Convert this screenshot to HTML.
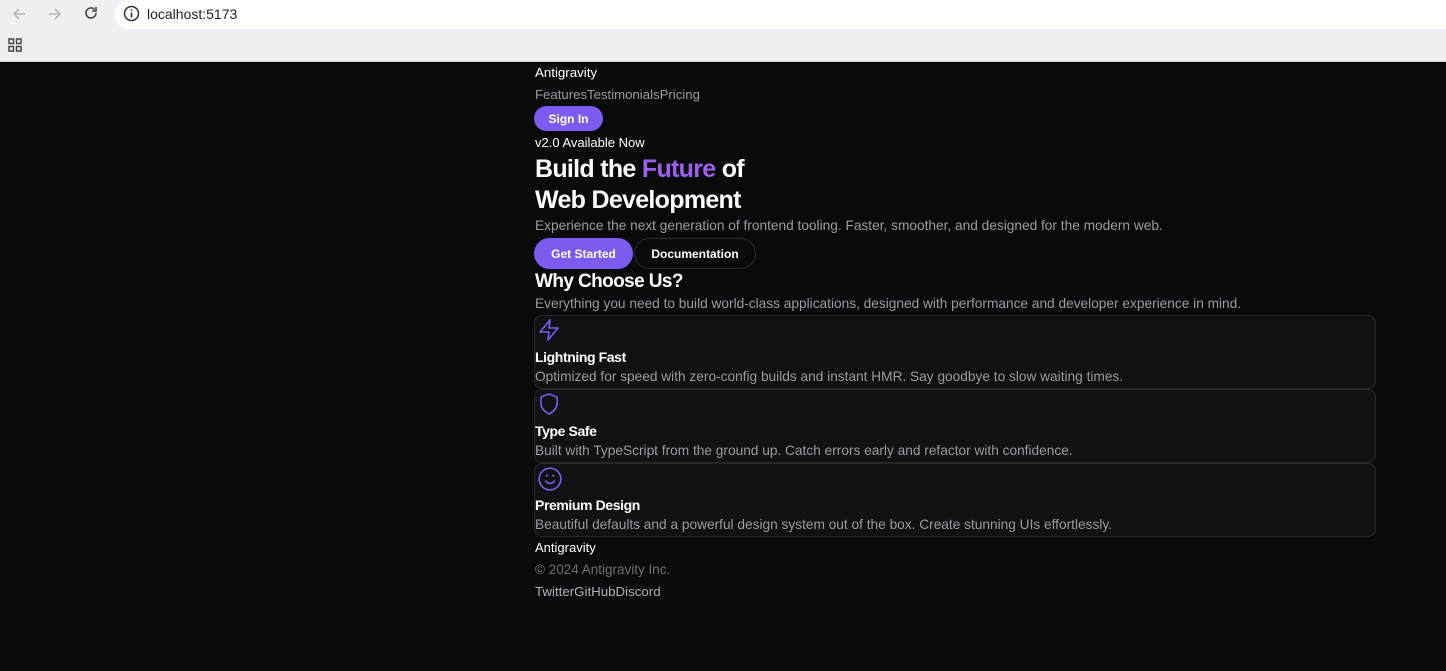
<!DOCTYPE html>
<html><head><style>
*{margin:0;padding:0;box-sizing:border-box}
body{width:1446px;height:671px;overflow:hidden;background:#0a0a0b;font-family:"Liberation Sans",sans-serif;position:relative}
.chrome{position:absolute;left:0;top:0;width:1446px;height:62px;background:#f0eff4;border-bottom:1px solid #d8d8dc}
.url{position:absolute;left:115px;top:0;width:1331px;height:29px;background:#fff;border-radius:14px 0 0 14px}
.a{position:absolute;left:535px;white-space:nowrap}
.w{color:#fff}.g{color:#9a9aa3}
.btn{position:absolute;border-radius:16px;color:#fff;font-weight:bold;font-size:12px;display:flex;align-items:center;justify-content:center}
.card{position:absolute;left:534px;width:842px;height:74px;background:#111113;border:1px solid #26262b;border-radius:8px}
.card svg{position:absolute;left:2px;top:2px}
.card .t{position:absolute;left:0px;top:33px;color:#fff;font-weight:bold;font-size:14px;letter-spacing:-0.4px}
.card .d{position:absolute;left:0px;top:53px;color:#9a9aa3;font-size:13.7px}
</style></head><body>
<div class="chrome">
<svg style="position:absolute;left:10px;top:5px" width="18" height="18" viewBox="0 0 18 18"><path d="M15 9H4M9 4L4 9l5 5" stroke="#b8b8bc" stroke-width="1.6" fill="none"/></svg>
<svg style="position:absolute;left:46px;top:5px" width="18" height="18" viewBox="0 0 18 18"><path d="M3 9h11M9 4l5 5-5 5" stroke="#b8b8bc" stroke-width="1.6" fill="none"/></svg>
<svg style="position:absolute;left:82px;top:4px" width="18" height="18" viewBox="0 0 18 18"><path d="M14 9a5 5 0 1 1-1.5-3.6" stroke="#444" stroke-width="1.6" fill="none"/><path d="M14 3v4h-4" fill="none" stroke="#444" stroke-width="1.6"/></svg>
<div class="url"></div>
<svg style="position:absolute;left:123px;top:5px" width="17" height="17" viewBox="0 0 17 17"><circle cx="8.5" cy="8.5" r="7" stroke="#333" stroke-width="1.5" fill="none"/><path d="M8.5 7.5v5M8.5 4.5v1.4" stroke="#333" stroke-width="1.6"/></svg>
<div style="position:absolute;left:147px;top:6px;font-size:14px;color:#222">localhost:5173</div>
<svg style="position:absolute;left:8px;top:38px" width="14" height="14" viewBox="0 0 14 14" fill="none" stroke="#444" stroke-width="1.5"><rect x="1" y="1" width="4.5" height="4.5"/><rect x="8.5" y="1" width="4.5" height="4.5"/><rect x="1" y="8.5" width="4.5" height="4.5"/><rect x="8.5" y="8.5" width="4.5" height="4.5"/></svg>
</div>
<div class="a w" style="top:65px;font-size:13.3px">Antigravity</div>
<div class="a g" style="top:87px;font-size:13.2px">FeaturesTestimonialsPricing</div>
<div class="btn" style="left:534px;top:106px;width:69px;height:25px;background:#7c5cf0">Sign In</div>
<div class="a w" style="top:135px;font-size:13px">v2.0 Available Now</div>
<div class="a w" style="top:154px;font-size:25px;font-weight:bold;letter-spacing:-0.7px;line-height:31px">Build the <span style="color:#9c5ff0">Future</span> of<br>Web Development</div>
<div class="a g" style="top:218px;font-size:13.7px">Experience the next generation of frontend tooling. Faster, smoother, and designed for the modern web.</div>
<div class="btn" style="left:534px;top:238px;width:99px;height:31px;background:#7c5cf0">Get Started</div>
<div class="btn" style="left:634px;top:238px;width:122px;height:31px;border:1px solid #2a2a2e">Documentation</div>
<div class="a w" style="top:271px;font-size:19px;font-weight:bold;letter-spacing:-0.6px">Why Choose Us?</div>
<div class="a g" style="top:296px;font-size:13.7px">Everything you need to build world-class applications, designed with performance and developer experience in mind.</div>
<div class="card" style="top:315px"><svg width="24" height="24" viewBox="0 0 24 24" fill="none" stroke="#7c5cf0" stroke-width="1.6" stroke-linejoin="round"><path d="M13 2L3 14h9l-1 8 10-12h-9l1-8z"/></svg><div class="t">Lightning Fast</div><div class="d">Optimized for speed with zero-config builds and instant HMR. Say goodbye to slow waiting times.</div></div>
<div class="card" style="top:389px"><svg width="24" height="24" viewBox="0 0 24 24" fill="none" stroke="#7c5cf0" stroke-width="1.6" stroke-linejoin="round"><path d="M12 22s8-4 8-10V5l-8-3-8 3v7c0 6 8 10 8 10z"/></svg><div class="t">Type Safe</div><div class="d">Built with TypeScript from the ground up. Catch errors early and refactor with confidence.</div></div>
<div class="card" style="top:463px"><svg width="26" height="26" viewBox="0 0 24 24" fill="none" stroke="#7c5cf0" stroke-width="1.5" stroke-linecap="round"><circle cx="12" cy="12" r="10"/><path d="M8 14s1.5 2 4 2 4-2 4-2"/><path d="M9 9h.01M15 9h.01" stroke-width="2"/></svg><div class="t">Premium Design</div><div class="d">Beautiful defaults and a powerful design system out of the box. Create stunning UIs effortlessly.</div></div>
<div class="a w" style="top:540px;font-size:13px">Antigravity</div>
<div class="a" style="top:562px;font-size:13.5px;color:#6e6e78">© 2024 Antigravity Inc.</div>
<div class="a g" style="top:584px;font-size:13.3px;color:#b0b0b8">TwitterGitHubDiscord</div>
</body></html>
